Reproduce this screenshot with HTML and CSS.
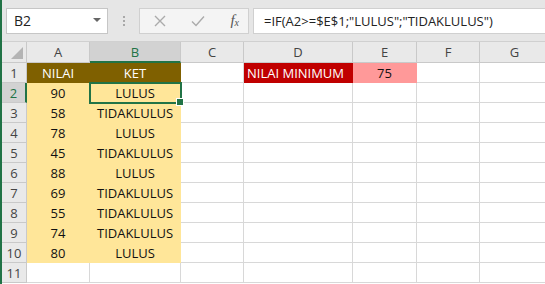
FILE: index.html
```html
<!DOCTYPE html>
<html lang="id">
<head>
    <meta charset="UTF-8">
    <title>Excel - Fungsi IF</title>
    <link rel="stylesheet" href="styles.css">
</head>
<body>
    <div class="app">
        <div class="toolbar">
            <div class="namebox">
                <span>B2</span>
                <svg class="caret" width="8" height="5" viewBox="0 0 8 5"><path d="M0 0h8L4 4z" fill="#666"/></svg>
            </div>
            <div class="grip"><i></i><i></i><i></i></div>
            <div class="fxbox">
                <svg width="12" height="12" viewBox="0 0 12 12"><path d="M1 1l10 10M11 1L1 11" stroke="#ababab" stroke-width="1.4" fill="none"/></svg>
                <svg width="14" height="12" viewBox="0 0 14 12"><path d="M1 6.5l4 4L13 1.5" stroke="#ababab" stroke-width="1.4" fill="none"/></svg>
                <span class="fx">f<sub>x</sub></span>
            </div>
            <div class="formula">=IF(A2&gt;=$E$1;"LULUS";"TIDAKLULUS")</div>
        </div>

        <div class="sheet">
            <div class="hd corner"><svg width="12" height="12" viewBox="0 0 12 12"><path d="M12 0v12H0z" fill="#b4b4b4"/></svg></div>
            <div class="hd col">A</div>
            <div class="hd col sel">B</div>
            <div class="hd col">C</div>
            <div class="hd col">D</div>
            <div class="hd col">E</div>
            <div class="hd col">F</div>
            <div class="hd col">G</div>

            <div class="hd row">1</div>
            <div class="c head">NILAI</div>
            <div class="c head">KET</div>
            <div class="c"></div>
            <div class="c label">NILAI MINIMUM</div>
            <div class="c minval">75</div>
            <div class="c"></div>
            <div class="c"></div>

            <div class="hd row sel">2</div>
            <div class="c data">90</div>
            <div class="c data active">LULUS</div>
            <div class="c"></div><div class="c"></div><div class="c"></div><div class="c"></div><div class="c"></div>

            <div class="hd row">3</div>
            <div class="c data">58</div>
            <div class="c data">TIDAKLULUS</div>
            <div class="c"></div><div class="c"></div><div class="c"></div><div class="c"></div><div class="c"></div>

            <div class="hd row">4</div>
            <div class="c data">78</div>
            <div class="c data">LULUS</div>
            <div class="c"></div><div class="c"></div><div class="c"></div><div class="c"></div><div class="c"></div>

            <div class="hd row">5</div>
            <div class="c data">45</div>
            <div class="c data">TIDAKLULUS</div>
            <div class="c"></div><div class="c"></div><div class="c"></div><div class="c"></div><div class="c"></div>

            <div class="hd row">6</div>
            <div class="c data">88</div>
            <div class="c data">LULUS</div>
            <div class="c"></div><div class="c"></div><div class="c"></div><div class="c"></div><div class="c"></div>

            <div class="hd row">7</div>
            <div class="c data">69</div>
            <div class="c data">TIDAKLULUS</div>
            <div class="c"></div><div class="c"></div><div class="c"></div><div class="c"></div><div class="c"></div>

            <div class="hd row">8</div>
            <div class="c data">55</div>
            <div class="c data">TIDAKLULUS</div>
            <div class="c"></div><div class="c"></div><div class="c"></div><div class="c"></div><div class="c"></div>

            <div class="hd row">9</div>
            <div class="c data">74</div>
            <div class="c data">TIDAKLULUS</div>
            <div class="c"></div><div class="c"></div><div class="c"></div><div class="c"></div><div class="c"></div>

            <div class="hd row">10</div>
            <div class="c data">80</div>
            <div class="c data">LULUS</div>
            <div class="c"></div><div class="c"></div><div class="c"></div><div class="c"></div><div class="c"></div>

            <div class="hd row">11</div>
            <div class="c"></div><div class="c"></div><div class="c"></div><div class="c"></div><div class="c"></div><div class="c"></div><div class="c"></div>
        </div>
    </div>
</body>
</html>
```

FILE: styles.css
```css
/* Excel look */
* {
    box-sizing: border-box;
}

body {
    margin: 0;
    font-family: "Open Sans", sans-serif;
    background: #ffffff;
    overflow: hidden;
}

.app {
    width: 545px;
    height: 284px;
    border-left: 2px solid #217346; /* Excel green */
    overflow: hidden;
}

/* formula bar */
.toolbar {
    height: 42px;
    background: #e6e6e6;
    display: flex;
    align-items: center;
    padding: 0 0 0 4px;
    border-bottom: 1px solid #d0d0d0;
}

.namebox {
    width: 102px;
    height: 26px;
    background: #ffffff;
    border: 1px solid #c6c6c6;
    display: flex;
    align-items: center;
    justify-content: space-between;
    padding: 0 6px 0 7px;
    font-size: 14px;
    color: #222;
}

.grip {
    width: 31px;
    display: flex;
    flex-direction: column;
    align-items: center;
    gap: 2px;
}

.grip i {
    width: 2px;
    height: 2px;
    background: #a8a8a8;
}

.fxbox {
    width: 110px;
    height: 26px;
    background: #f4f4f4;
    border: 1px solid #d0d0d0;
    display: flex;
    align-items: center;
    justify-content: space-between;
    padding: 0 9px 0 14px;
}

.fx {
    font-family: "Liberation Serif", serif;
    font-style: italic;
    font-size: 15px;
    color: #555;
}

.fx sub {
    font-size: 10px;
    vertical-align: -1px;
}

.formula {
    flex: 1;
    height: 26px;
    margin-left: 4px;
    background: #ffffff;
    border: 1px solid #d0d0d0;
    border-right: none;
    display: flex;
    align-items: center;
    padding-left: 10px;
    font-size: 13px;
    color: #222;
    white-space: nowrap;
}

/* grid */
.sheet {
    display: grid;
    grid-template-columns: 25px 63px 91px 63px 109px 64px 63px 70px;
    grid-template-rows: 21px repeat(11, 20px);
    font-size: 13px;
}

.hd {
    background: #e9e9e9;
    color: #444;
    border-right: 1px solid #c9c9c9;
    border-bottom: 1px solid #c9c9c9;
    display: flex;
    align-items: center;
    justify-content: center;
}

.corner {
    align-items: flex-end;
    justify-content: flex-end;
    padding: 0 3px 3px 0;
}

.hd.col.sel {
    background: #d2d2d2;
    color: #217346;
    border-bottom: 2px solid #217346;
}

.hd.row.sel {
    background: #d2d2d2;
    color: #217346;
    border-right: 2px solid #217346;
}

.c {
    border-right: 1px solid #d8d8d8;
    border-bottom: 1px solid #d8d8d8;
    display: flex;
    align-items: center;
    justify-content: center;
    padding-top: 1px;
    color: #111;
    white-space: nowrap;
}

.head {
    background: #7f6000;
    border-color: #7f6000;
    color: #ffffff;
}

.data {
    background: #ffe699;
    border-color: #ffe699;
}

.label {
    background: #c00000;
    border-color: #c00000;
    color: #ffffff;
    justify-content: flex-start;
    padding-left: 3px;
}

.minval {
    background: #ff9999;
    border-color: #ff9999;
}

.active {
    position: relative;
    outline: 2px solid #217346;
    outline-offset: -1px;
}

.active::after {
    content: "";
    position: absolute;
    right: -4px;
    bottom: -4px;
    width: 6px;
    height: 6px;
    background: #217346;
    border: 1px solid #ffffff;
}
```
